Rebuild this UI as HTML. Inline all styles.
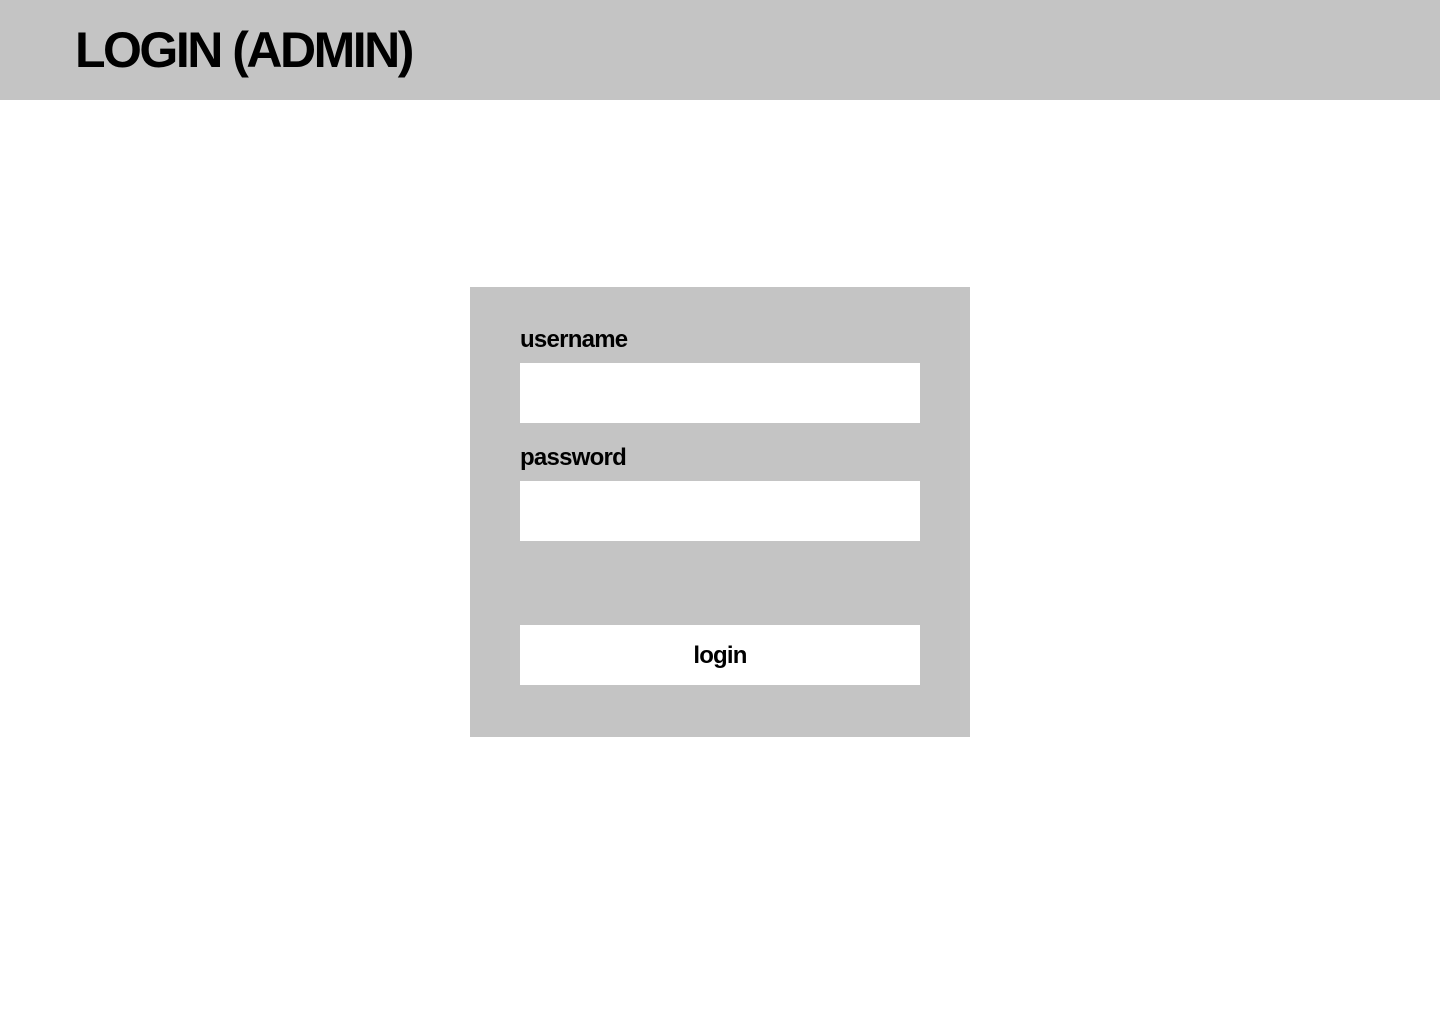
<!DOCTYPE html>
<html><head><meta charset="utf-8"><style>
html,body{margin:0;padding:0;width:1440px;height:1024px;background:#fff;font-family:"Liberation Sans",sans-serif;overflow:hidden}
.hdr{position:absolute;left:0;top:0;width:1440px;height:100px;background:#c4c4c4}
.hdr h1{position:absolute;left:75px;top:22px;margin:0;font-size:50px;line-height:56px;font-weight:bold;color:#000;letter-spacing:-2.5px}
.box{position:absolute;left:470px;top:287px;width:500px;height:450px;background:#c4c4c4}
.lbl{position:absolute;left:50px;font-size:24px;font-weight:bold;line-height:28px;letter-spacing:-0.75px}
.in{position:absolute;left:50px;width:400px;height:60px;background:#fff}
.btn{position:absolute;left:50px;top:338px;width:400px;height:60px;background:#fff;text-align:center;font-size:24px;font-weight:bold;line-height:62px;letter-spacing:-0.8px}
</style></head><body>
<div class="hdr"><h1>LOGIN (ADMIN)</h1></div>
<div class="box">
<div class="lbl" style="top:39px">username</div>
<div class="in" style="top:76px"></div>
<div class="lbl" style="top:157px">password</div>
<div class="in" style="top:194px"></div>
<div class="btn">login</div>
</div>
</body></html>
